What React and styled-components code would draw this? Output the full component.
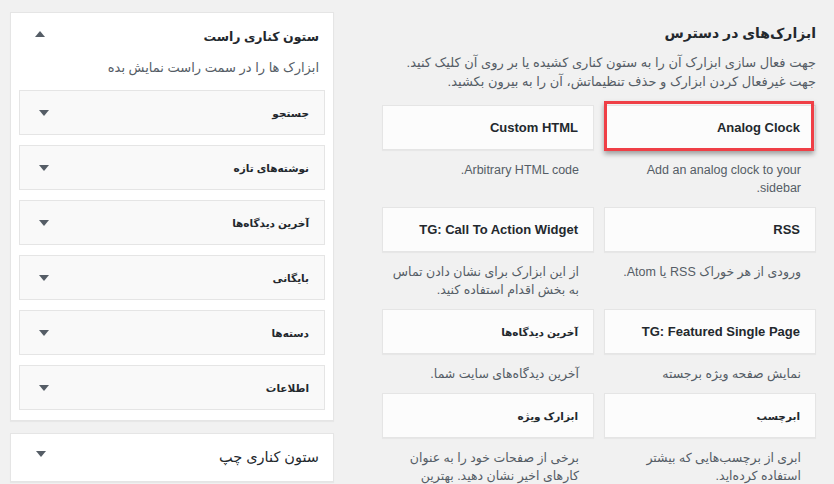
import React from 'react'
import styled, { createGlobalStyle, css } from 'styled-components'

const fonte = `font-family: "Liberation Sans", "DejaVu Sans", sans-serif`

const GlobalStyle = createGlobalStyle`
  html, body {
    margin: 0;
    padding: 0;
    background: #f1f1f1;
  }
  body {
    ${fonte};
    color: #23282d;
  }
`

const Page = styled.div`
  direction: rtl;
  display: flex;
  align-items: flex-start;
  gap: 48px;
  padding: 0 18px 0 10px;
  height: 484px;
  overflow: hidden;
  box-sizing: border-box;
`

const Available = styled.section`
  width: 434px;
  flex-shrink: 0;
`

const Heading = styled.h2`
  margin: 23px 0 0;
  font-size: 14px;
  line-height: 20px;
  font-weight: 700;
  color: #23282d;
`

const Intro = styled.p`
  margin: 10px 0 14px;
  font-size: 13px;
  line-height: 19px;
  color: #555d66;
`

const CardGrid = styled.div`
  display: grid;
  grid-template-columns: 212px 212px;
  column-gap: 10px;
`

const Widget = styled.div``

const Card = styled.div`
  position: relative;
  height: 45px;
  box-sizing: border-box;
  display: flex;
  align-items: center;
  padding: 0 15px;
  background: #fcfcfc;
  border: 1px solid #e5e5e5;
  box-shadow: 0 1px 1px rgba(0, 0, 0, 0.04);
  ${p => p.$marked && css`
    &::after {
      content: '';
      position: absolute;
      top: -5px;
      bottom: -2px;
      left: -1px;
      right: 1px;
      border: 3px solid #ef3f46;
      box-shadow: 0 3px 5px rgba(0, 0, 0, 0.35);
    }
  `}
`

const CardTitle = styled.h3`
  margin: 0;
  font-size: ${p => (p.$fa ? '10.5px' : '13px')};
  font-weight: 700;
  color: #23282d;
`

const CardDesc = styled.p`
  margin: 0;
  padding: 11px 15px 10px 4px;
  font-size: 12.5px;
  line-height: 18px;
  color: #555d66;
`

const Sidebars = styled.div`
  width: 324px;
  flex-shrink: 0;
  padding-top: 12px;
  display: flex;
  flex-direction: column;
  gap: 12px;
`

const Panel = styled.div`
  background: #fff;
  border: 1px solid #e5e5e5;
  box-shadow: 0 1px 1px rgba(0, 0, 0, 0.04);
  padding-bottom: ${p => (p.$closed ? '0' : '10px')};
`

const PanelHeader = styled.div`
  display: flex;
  justify-content: space-between;
  align-items: ${p => (p.$closed ? 'flex-start' : 'center')};
  padding: ${p => (p.$closed ? '13px 14px 14px 25px' : '15px 14px 0 24px')};
`

const PanelTitle = styled.h2`
  margin: 0;
  font-size: ${p => (p.$big ? '14.5px' : '12.5px')};
  font-weight: ${p => (p.$big ? 400 : 700)};
  line-height: ${p => (p.$big ? '20px' : '18px')};
  color: #23282d;
`

const PanelDesc = styled.p`
  margin: 13px 14px 13px;
  font-size: 13px;
  line-height: 18px;
  color: #555d66;
`

const ItemList = styled.div`
  display: flex;
  flex-direction: column;
  gap: 10px;
  padding: 0 8px;
`

const Item = styled.div`
  height: 45px;
  box-sizing: border-box;
  display: flex;
  align-items: center;
  justify-content: space-between;
  padding: 0 15px 0 19px;
  background: #f9f9f9;
  border: 1px solid #e5e5e5;
`

const ItemTitle = styled.span`
  font-size: 10.5px;
  font-weight: 700;
  color: #23282d;
`

const Arrow = styled.span`
  display: block;
  width: 0;
  height: 0;
  border-left: 5px solid transparent;
  border-right: 5px solid transparent;
  ${p => (p.$up
    ? 'border-bottom: 6px solid #555d66;'
    : 'border-top: 6px solid #555d66;')}
  margin-top: ${p => p.$offset || 0}px;
`

const widgets = [
  { title: 'Analog Clock', desc: 'Add an analog clock to your sidebar.', marked: true },
  { title: 'Custom HTML', desc: 'Arbitrary HTML code.' },
  { title: 'RSS', desc: 'ورودی از هر خوراک RSS یا Atom.' },
  { title: 'TG: Call To Action Widget', desc: 'از این ابزارک برای نشان دادن تماس به بخش اقدام استفاده کنید.' },
  { title: 'TG: Featured Single Page', desc: 'نمایش صفحه ویژه برجسته' },
  { title: 'آخرین دیدگاه‌ها', desc: 'آخرین دیدگاه‌های سایت شما.', fa: true },
  { title: 'ابرچسب', desc: 'ابری از برچسب‌هایی که بیشتر استفاده کرده‌اید.', fa: true },
  { title: 'ابزارک ویژه', desc: 'برخی از صفحات خود را به عنوان کارهای اخیر نشان دهید. بهترین', fa: true },
]

const itens = ['جستجو', 'نوشته‌های تازه', 'آخرین دیدگاه‌ها', 'بایگانی', 'دسته‌ها', 'اطلاعات']

export default function App() {
  return (
    <>
      <GlobalStyle />
      <Page>
        <Available>
          <Heading>ابزارک‌های در دسترس</Heading>
          <Intro>
            جهت فعال سازی ابزارک آن را به ستون کناری کشیده یا بر روی آن کلیک کنید.
            <br />
            جهت غیرفعال کردن ابزارک و حذف تنظیماتش، آن را به بیرون بکشید.
          </Intro>
          <CardGrid>
            {widgets.map(w => (
              <Widget key={w.title}>
                <Card $marked={w.marked}>
                  <CardTitle $fa={w.fa}>{w.title}</CardTitle>
                </Card>
                <CardDesc>{w.desc}</CardDesc>
              </Widget>
            ))}
          </CardGrid>
        </Available>

        <Sidebars>
          <Panel>
            <PanelHeader>
              <PanelTitle>ستون کناری راست</PanelTitle>
              <Arrow $up $offset={-6} />
            </PanelHeader>
            <PanelDesc>ابزارک ها را در سمت راست نمایش بده</PanelDesc>
            <ItemList>
              {itens.map(nome => (
                <Item key={nome}>
                  <ItemTitle>{nome}</ItemTitle>
                  <Arrow />
                </Item>
              ))}
            </ItemList>
          </Panel>
          <Panel $closed>
            <PanelHeader $closed>
              <PanelTitle $big>ستون کناری چپ</PanelTitle>
              <Arrow $offset={4} />
            </PanelHeader>
          </Panel>
        </Sidebars>
      </Page>
    </>
  )
}
